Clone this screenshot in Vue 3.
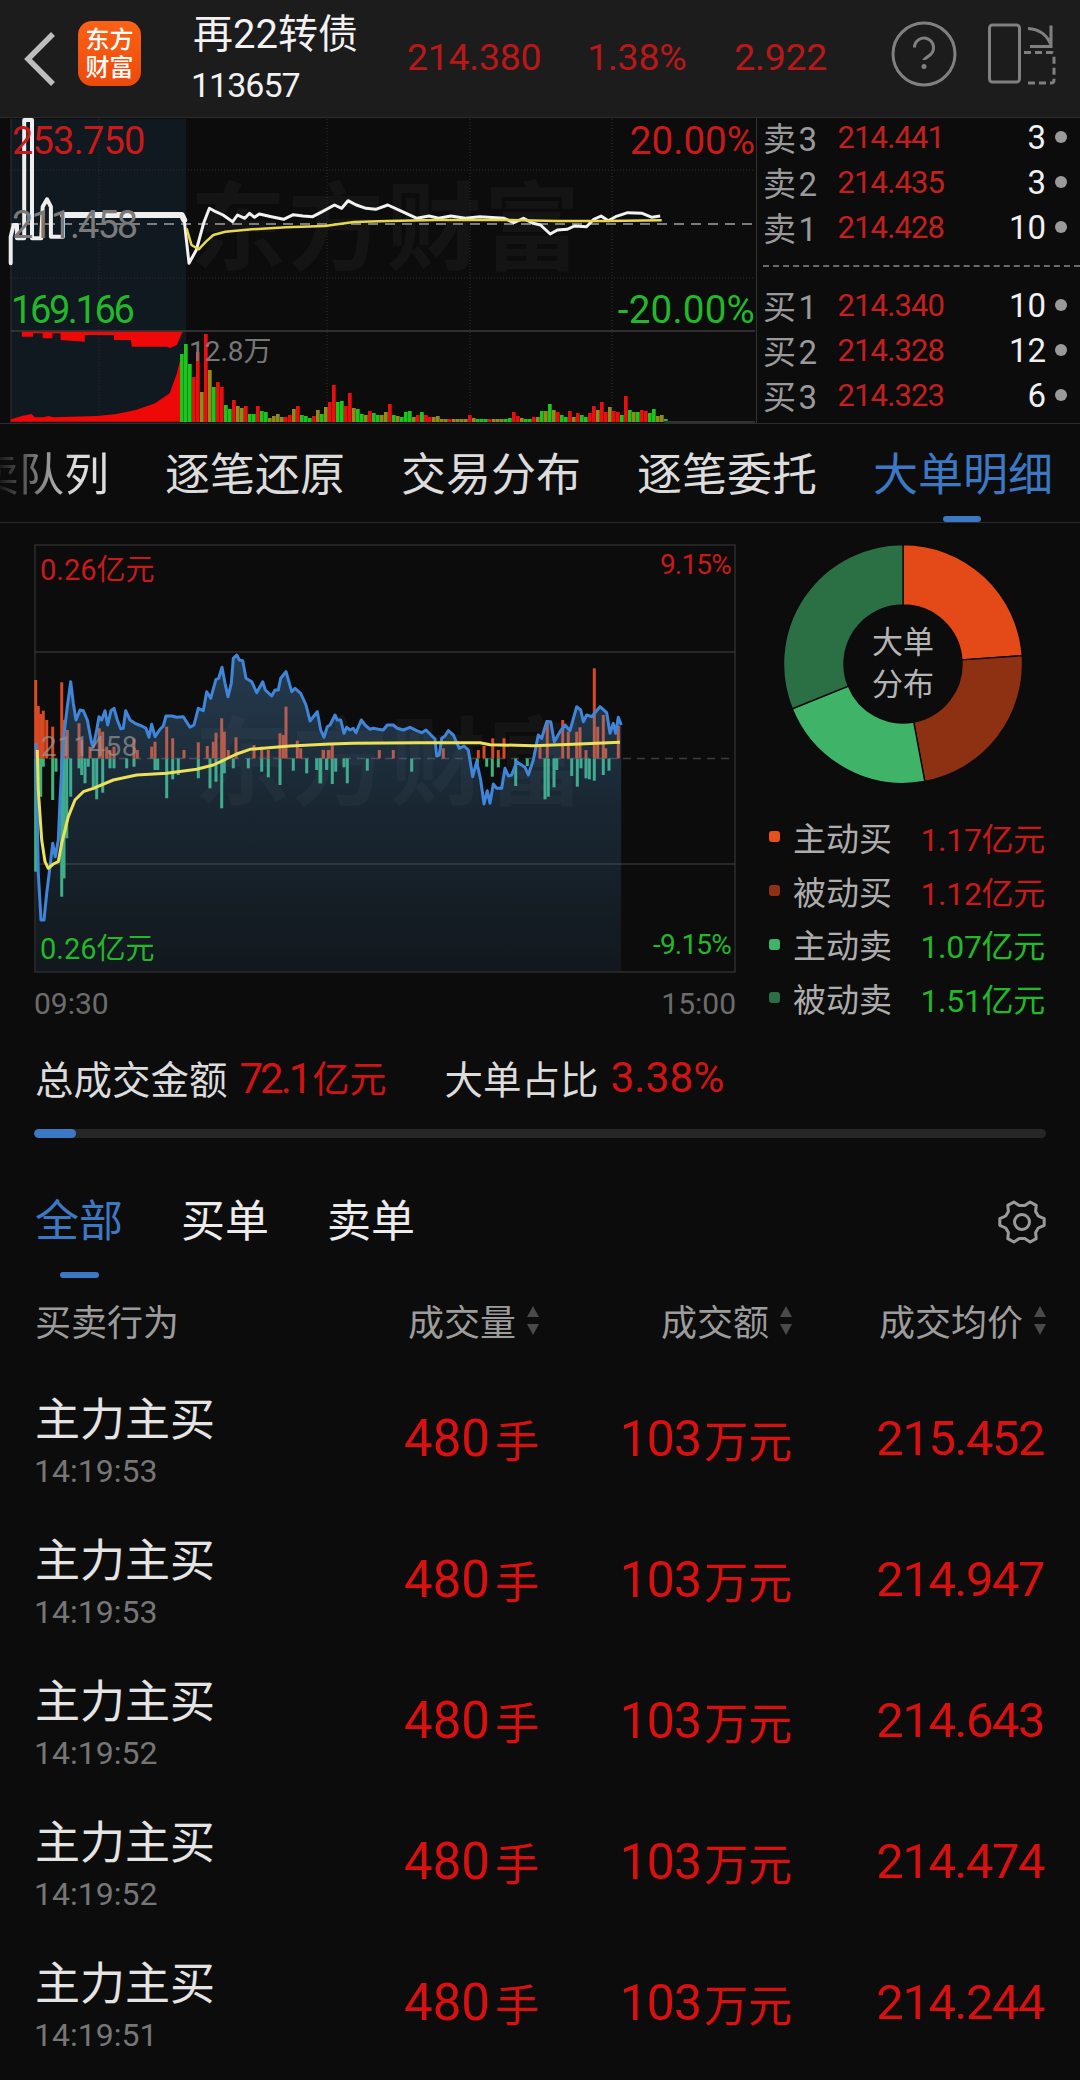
<script setup>
const pts = (a, sx, ox, sy, oy) => {
  const out = []
  for (let i = 0; i < a.length; i += 2) out.push([+(a[i] / sx + ox).toFixed(1), +(a[i + 1] / sy + oy).toFixed(1)])
  return out
}
const str = (p) => p.map((q) => q.join(',')).join(' ')
const T = (a) => pts(a, 2.063, 0, 3, 110)
const preLine = str(T([22,460,22,380,28,345,35,345,35,385,50,385,50,30,66,30,66,385,85,385,88,290,97,268,105,290,105,380,130,380,130,315]))
const preThick = str(T([130,315,375,315,380,330]))
const mainLine = str(T([380,330,390,460,405,420,420,340,432,295,445,305,460,315,480,335,490,315,505,325,515,310,525,322,535,312,560,320,585,328,605,314,625,318,645,320,665,305,690,285,705,295,718,272,735,285,755,295,775,298,800,285,830,305,860,325,885,318,905,325,930,318,960,325,990,320,1040,325,1060,338,1080,325,1100,340,1115,345,1135,372,1150,360,1170,358,1185,348,1210,350,1225,328,1240,318,1255,332,1270,320,1295,308,1325,310,1345,322,1362,318]))
const avgLine = str(T([385,355,395,405,410,418,425,395,440,375,465,365,520,358,590,352,670,348,730,336,800,333,900,330,1050,330,1150,333,1250,333,1365,331]))
const redArea = str(T([22,935,22,928,45,918,65,912,72,922,90,922,100,918,110,922,200,918,240,912,280,900,320,880,350,850,365,790,375,730,378,935]))
const redTop = str(T([45,665,45,680,68,680,68,670,88,670,88,685,108,685,108,670,125,670,125,690,175,695,175,675,235,675,235,690,270,690,272,710,345,710,350,715,365,705,375,670,378,665]))
const gridV = [99, 327, 470, 612]
const gridH = [170, 278]

const volA = 'g68 g78 g58 r45 r70 o30 r88 o52 g35 r40 r35 g17 g13 r22 o16 o14 r16 g8 g8 r16 g11 g10 o4 o6 o8 o5 r5 r7 o13 r16 g7 g6 g4 r6 o12 g8 o15 r20 r37 g20 g21 r16 r29 o14 g13 g8 o7 r11 g9 g7 o7 o10 r18 g7 o6 g5 g10 g11 o5 r7 g10 r7'.split(' ')
const volB = 'g8 r6 r5 o5 o6 o3 o3 r3 o3 o3 o3 o3 r7 o4 g3 g3 g3 r3 o3 o3 o3 g3 g4 r10 r6 o4 g3 g3 r5 o5 g11 o11 g18 o12 r10 g7 g5 r11 o5 r9 g7 g5 r9 r16 o12 r20 r10 o15 r11 r10 g7 r26 g12 o10 g10 r12 r11 g9 g13 o6 o7 g3'.split(' ')
const volColor = { r: '#e80f0f', g: '#1cc41c', o: '#938a1c' }
const bar = (s, x) => ({ x, h: +s.slice(1), c: volColor[s[0]] })
const vols = [
  ...volA.map((s, i) => bar(s, 180 + i * 4)),
  ...volB.map((s, i) => bar(s, 420 + i * 4))
]

const M1 = (a) => pts(a, 3, 30, 3, 640)
const M2 = (a) => pts(a, 3, 320, 3, 640)
const blueP = [
  ...M1([18,310,25,700,33,840,42,840,50,760,60,680,68,610,76,650,85,600,90,480,100,300,112,200,122,125,130,190,138,240,150,210,160,212,172,240,185,310,190,320,200,270,207,230,215,240,225,212,233,255,243,212,252,205,262,240,272,266,280,265,287,212,300,240,315,250,335,258,348,265,357,292,365,253,375,290,390,268,400,258,408,228,425,228,440,232,460,230,480,262,492,255,505,205,520,212,530,155,542,175,558,118,566,115,576,82,585,130,594,170,604,130,610,55,620,45,628,60,638,62,648,115,665,125,680,158,698,125,706,150,725,168,735,150,745,150,752,115,768,95,785,155,795,145,812,160,828,195,840,243,862,215,872,270,882,292,892,260,900,255]),
  ...M2([35,245,45,225,52,240,62,240,72,280,80,262,90,270,100,265,108,278,124,240,135,255,150,268,160,265,175,268,190,270,202,255,220,255,232,265,250,270,270,262,290,272,305,278,318,270,345,297,350,348,358,345,365,295,375,288,385,272,400,285,418,325,432,318,445,330,458,410,470,365,482,420,492,492,502,452,510,490,520,432,530,445,545,445,555,385,565,408,575,405,590,365,600,372,615,382,625,405,640,360,655,285,665,295,680,245,692,245,703,305,720,275,735,255,750,272,770,200,782,210,790,245,800,225,815,230,840,200,860,218,870,280,880,250,887,280,895,232,904,255])
]
const blueLine = str(blueP)
const blueFill = str([[36, 971], ...blueP, [621, 971]])
const yellowLine = str([
  ...M1([22,330,25,450,35,600,45,665,55,685,70,672,85,665,95,610,115,530,135,480,160,455,190,445,250,420,320,405,410,400,500,388,550,375,620,342,660,328,780,318,900,312]),
  ...M2([100,310,300,308,480,308,510,314,640,317,760,313,900,307])
])
const ZERO = 758.5
const upBars = [
  ...pts([17,120,25,198,32,222,40,212,50,240,68,260,95,127,102,240,112,270,147,250,155,300,180,320,208,265,218,275,230,320,240,330,252,320,312,296,322,330,365,320,375,305,410,260,428,295,462,330,505,307,532,318,550,305,558,278,575,235,583,275,595,330,618,292,672,315,695,320,715,330,750,280,760,285,768,200,802,302,812,325,880,330,897,330], 3, 30, 3, 640),
  ...pts([10,330,25,330,37,315,178,330,220,330,370,325,475,330,492,318,518,295,535,330,552,295,660,320,682,240,728,240,745,275,770,275,780,262,798,330,823,85,833,260,850,225,857,325,895,258], 3, 320, 3, 640)
]
const downBars = [
  ...pts([17,695,25,420,32,470,40,380,68,480,78,395,95,770,102,715,110,595,122,470,147,385,155,405,165,430,175,380,190,450,200,478,218,458,240,385,252,385,290,385,312,380,375,390,383,390,410,475,428,418,445,405,505,415,540,445,558,425,575,505,583,400,610,385,655,385,695,395,715,412,750,435,790,392,830,400,860,390,872,430,890,385], 3, 30, 3, 640),
  ...pts([0,430,20,390,37,432,47,395,72,382,82,430,142,392,275,395,472,385,500,380,517,410,535,382,587,438,622,378,675,478,685,470,702,442,710,390,755,408,772,440,783,385,798,415,808,418,823,422,850,405,867,392], 3, 320, 3, 640)
]

const CX = 120, CY = 120, R = 119.5, r = 59
const pol = (rad, deg) => {
  const a = ((deg - 90) * Math.PI) / 180
  return `${(CX + rad * Math.cos(a)).toFixed(2)} ${(CY + rad * Math.sin(a)).toFixed(2)}`
}
const seg = (a, b, c) => ({
  c,
  d: `M${pol(r, a)} L${pol(R, a)} A${R} ${R} 0 ${b - a > 180 ? 1 : 0} 1 ${pol(R, b)} L${pol(r, b)} A${r} ${r} 0 ${b - a > 180 ? 1 : 0} 0 ${pol(r, a)} Z`
})
const donut = [seg(0, 86, '#e34a17'), seg(86, 169.5, '#8e3113'), seg(169.5, 248, '#3fb368'), seg(248, 360, '#2b6f45')]

const gearPath = (() => {
  const cx = 24, cy = 23, hi = 22.5, lo = 17.5
  let d = ''
  for (let i = 0; i < 12; i++) {
    const deg = i * 30
    const rad = i % 2 === 0 ? hi : lo
    const a1 = ((deg - 9) * Math.PI) / 180, a2 = ((deg + 9) * Math.PI) / 180
    const p1 = `${(cx + rad * Math.cos(a1)).toFixed(1)} ${(cy + rad * Math.sin(a1) * 0.95).toFixed(1)}`
    const p2 = `${(cx + rad * Math.cos(a2)).toFixed(1)} ${(cy + rad * Math.sin(a2) * 0.95).toFixed(1)}`
    d += `${i === 0 ? 'M' : 'L'}${p1} L${p2} `
  }
  return d + 'Z'
})()

const sells = [['卖3', '214.441', '3'], ['卖2', '214.435', '3'], ['卖1', '214.428', '10']]
const buys = [['买1', '214.340', '10'], ['买2', '214.328', '12'], ['买3', '214.323', '6']]
const tabs = ['卖队列', '逐笔还原', '交易分布', '逐笔委托', '大单明细']
const legend = [
  ['#e8501c', '主动买', '1.17', 'red'],
  ['#8e3113', '被动买', '1.12', 'red'],
  ['#3fb368', '主动卖', '1.07', 'green'],
  ['#2b6f45', '被动卖', '1.51', 'green']
]
const rows = [
  ['14:19:53', '215.452'],
  ['14:19:53', '214.947'],
  ['14:19:52', '214.643'],
  ['14:19:52', '214.474'],
  ['14:19:51', '214.244']
]
</script>

<template>
  <div class="page">
    <header class="head">
      <svg class="back" width="34" height="58" viewBox="0 0 34 58"><path d="M30 4 L5 29 L30 54" fill="none" stroke="#bdbdbd" stroke-width="5.5" /></svg>
      <div class="logo"><span>东方</span><span>财富</span></div>
      <div class="title">
        <div class="t1">再22转债</div>
        <div class="t2">113657</div>
      </div>
      <div class="q q1">214.380</div>
      <div class="q q2">1.38%</div>
      <div class="q q3">2.922</div>
      <svg class="help" width="66" height="66" viewBox="0 0 66 66">
        <circle cx="33" cy="33" r="31" fill="none" stroke="#808080" stroke-width="3" />
        <path d="M23.5 26.5 a9.5 9.5 0 1 1 15.5 7.5 c-4 3 -6 4 -6 5" fill="none" stroke="#808080" stroke-width="3" />
        <circle cx="33" cy="45.5" r="2.5" fill="#808080" />
      </svg>
      <svg class="split" width="68" height="66" viewBox="0 0 68 66">
        <rect x="1.5" y="4" width="30" height="57" rx="3" fill="none" stroke="#808080" stroke-width="3" />
        <path d="M40 7.5 Q57 8.5 63 24 M63 4.5 V25.5 H42" fill="none" stroke="#808080" stroke-width="3" />
        <path d="M36 31.5 H63 q3 0 3 3 V59 q0 3 -3 3 H36" fill="none" stroke="#808080" stroke-width="3" stroke-dasharray="7 4" />
      </svg>
    </header>

    <section class="market">
      <div class="tchart">
        <svg width="757" height="306" viewBox="0 118 757 306">
          <rect x="11" y="119" width="175" height="304" fill="#101820" />
          <text x="190" y="262" class="wm">东方财富</text>
          <line v-for="x in gridV" :key="x" :x1="x" :x2="x" y1="119" y2="421" stroke="#2e2e2e" stroke-dasharray="1 2" />
          <line v-for="y in gridH" :key="y" x1="11" x2="755" :y1="y" :y2="y" stroke="#2e2e2e" stroke-dasharray="1 2" />
          <line x1="11" x2="11" y1="119" y2="423" stroke="#333" />
          <line x1="11" x2="755" y1="331" y2="331" stroke="#3a3a3a" stroke-width="1.5" />
          <line x1="11" x2="755" y1="224" y2="224" stroke="#7c7c7c" stroke-width="2" stroke-dasharray="10 7" />
          <polygon :points="redArea" fill="#ee0808" />
          <polygon :points="redTop" fill="#ee0808" />
          <rect v-for="(b, i) in vols" :key="i" :x="b.x" :y="422 - b.h" width="3.7" :height="b.h" :fill="b.c" />
          <rect x="664" y="421" width="91" height="2" fill="#333" />
          <polyline :points="preLine" fill="none" stroke="#eee" stroke-width="4" stroke-linejoin="round" stroke-linecap="round" />
          <polyline :points="preThick" fill="none" stroke="#eee" stroke-width="6" stroke-linejoin="round" stroke-linecap="round" />
          <polyline :points="mainLine" fill="none" stroke="#f2f2f2" stroke-width="3" stroke-linejoin="round" />
          <polyline :points="avgLine" fill="none" stroke="#e6d84e" stroke-width="2.5" stroke-linejoin="round" />
        </svg>
        <span class="lb red tl">253.750</span>
        <span class="lb red tr">20.00%</span>
        <span class="lb grey tm">211.458</span>
        <span class="lb green bl">169.166</span>
        <span class="lb green br">-20.00%</span>
        <span class="vol">12.8万</span>
      </div>
      <div class="book">
        <div class="bside">
          <div v-for="s in sells" :key="s[0]" class="brow">
            <span class="bl1">{{ s[0] }}</span><span class="bp">{{ s[1] }}</span><span class="bq">{{ s[2] }}</span><i class="dot"></i>
          </div>
        </div>
        <div class="bdash"></div>
        <div class="bside">
          <div v-for="s in buys" :key="s[0]" class="brow">
            <span class="bl1">{{ s[0] }}</span><span class="bp">{{ s[1] }}</span><span class="bq">{{ s[2] }}</span><i class="dot"></i>
          </div>
        </div>
      </div>
    </section>

    <nav class="tabs">
      <span v-for="(t, i) in tabs" :key="t" class="tab" :class="{ fade: i === 0, on: i === 4 }">{{ t }}</span>
      <i class="tabbar"></i>
    </nav>

    <section class="mid">
      <div class="mleft">
        <div class="mchart">
          <svg width="760" height="450" viewBox="0 524 760 450">
            <defs>
              <linearGradient id="bf" gradientUnits="userSpaceOnUse" x1="0" y1="650" x2="0" y2="972">
                <stop offset="0" stop-color="#5b9ad8" stop-opacity=".34" />
                <stop offset=".5" stop-color="#4d8fc6" stop-opacity=".2" />
                <stop offset="1" stop-color="#4d8fc6" stop-opacity=".09" />
              </linearGradient>
            </defs>
            <text x="194" y="797" class="wm">东方财富</text>
            <rect x="35" y="545" width="700" height="427" fill="none" stroke="#2c2c2c" stroke-width="1.5" />
            <line x1="35" x2="735" y1="652" y2="652" stroke="#303030" stroke-width="1.5" />
            <line x1="35" x2="735" y1="864" y2="864" stroke="#303030" stroke-width="1.5" />
            <line x1="35" x2="735" :y1="ZERO" :y2="ZERO" stroke="#3c3c3c" stroke-width="1.5" stroke-dasharray="8 6" />
            <rect v-for="(b, i) in upBars" :key="'u' + i" :x="b[0] - 1.5" :y="b[1]" width="3" :height="ZERO - b[1]" fill="#d84a22" />
            <rect v-for="(b, i) in downBars" :key="'d' + i" :x="b[0] - 1.5" :y="ZERO" width="3" :height="b[1] - ZERO" fill="#3cb37f" />
            <polygon :points="blueFill" fill="url(#bf)" />
            <polyline :points="blueLine" fill="none" stroke="#3f86da" stroke-width="3" stroke-linejoin="round" />
            <polyline :points="yellowLine" fill="none" stroke="#ece25a" stroke-width="3" stroke-linejoin="round" />
          </svg>
          <span class="ml red m1">0.26亿元</span>
          <span class="ml red m2">9.15%</span>
          <span class="ml green m3">0.26亿元</span>
          <span class="ml green m4">-9.15%</span>
          <span class="ml mg">211458</span>
        </div>
        <div class="axis"><span>09:30</span><span>15:00</span></div>
      </div>
      <div class="mright">
        <div class="donut">
          <svg width="240" height="240" viewBox="0 0 240 240">
            <path v-for="s in donut" :key="s.c" :d="s.d" :fill="s.c" stroke="#0c0c0c" stroke-width="1.4" />
          </svg>
          <div class="dtext">大单<br />分布</div>
        </div>
        <div class="legend">
          <div v-for="l in legend" :key="l[1]" class="lrow">
            <i class="ldot" :style="{ background: l[0] }"></i>
            <span class="ln">{{ l[1] }}</span>
            <span class="lv" :class="l[3]">{{ l[2] }}亿元</span>
          </div>
        </div>
      </div>
    </section>

    <section class="stats">
      <span>总成交金额</span><b class="amt"><em>72.1</em>亿元</b>
      <span class="s2">大单占比</span><b class="pct">3.38%</b>
    </section>
    <div class="progress"><i></i></div>

    <div class="subtabs">
      <div class="st on"><span>全部</span><i></i></div>
      <div class="st"><span>买单</span></div>
      <div class="st"><span>卖单</span></div>
      <svg class="gear" width="48" height="46" viewBox="0 0 48 46">
        <path :d="gearPath" fill="none" stroke="#9a9a9a" stroke-width="3" stroke-linejoin="round" />
        <circle cx="24" cy="23" r="7.5" fill="none" stroke="#9a9a9a" stroke-width="3" />
      </svg>
    </div>

    <div class="thead">
      <span class="c1">买卖行为</span>
      <span class="c2">成交量<i class="sort"><u></u><s></s></i></span>
      <span class="c3">成交额<i class="sort"><u></u><s></s></i></span>
      <span class="c4">成交均价<i class="sort"><u></u><s></s></i></span>
    </div>

    <div v-for="(r2, i) in rows" :key="i" class="trow">
      <div class="c1 who">
        <div class="nm">主力主买</div>
        <div class="tm2">{{ r2[0] }}</div>
      </div>
      <div class="c2 val v2">480<small class="u1">手</small></div>
      <div class="c3 val v3">103<small>万元</small></div>
      <div class="c4 val v4"><span>{{ r2[1] }}</span></div>
    </div>
  </div>
</template>

<style>
html, body { margin: 0; background: #0c0c0c; }
</style>

<style scoped>
.page {
  width: 1080px;
  height: 2080px;
  overflow: hidden;
  background: #0c0c0c;
  color: #e6e6e6;
  font-family: Roboto, "Noto Sans CJK SC", sans-serif;
  display: flex;
  flex-direction: column;
}
.red { color: #c81a1a; }
.green { color: #22b82a; }
.grey { color: #7a7a7a; }

.head {
  height: 118px;
  flex: none;
  box-sizing: border-box;
  background: #1c1c1c;
  border-bottom: 1px solid #2c2c2c;
  display: flex;
  align-items: center;
}
.back { margin-left: 23px; flex: none; }
.logo {
  margin-left: 21px;
  width: 63px;
  height: 65px;
  margin-top: -10px;
  flex: none;
  border-radius: 14px;
  background: linear-gradient(180deg, #fb6215, #ec4a0c);
  color: #fff;
  font-size: 24px;
  font-weight: 500;
  line-height: 28px;
  display: flex;
  flex-direction: column;
  align-items: center;
  justify-content: center;
}
.title { margin-left: 52px; width: 214px; flex: none; color: #f2f2f2; }
.t1 { font-size: 40px; line-height: 44px; margin-top: 0; }
.t2 { font-size: 34px; line-height: 40px; margin-top: 8px; letter-spacing: -1px; margin-left: -2px; }
.q { font-size: 37.5px; color: #b91818; flex: none; margin-top: -4px; letter-spacing: -.3px; }
.q2 { margin-left: 46px; }
.q3 { margin-left: 48px; }
.help { margin-left: auto; margin-top: -10px; flex: none; transform: translateX(2px); }
.split { margin-left: 33px; margin-right: 24px; margin-top: -10px; flex: none; }

.market { display: flex; height: 306px; flex: none; border-bottom: 1px solid #2c2c2c; box-sizing: border-box; }
.tchart { position: relative; width: 757px; flex: none; border-right: 1px solid #333; box-sizing: border-box; }
.tchart svg { display: block; }
.wm { font-size: 96px; font-weight: 700; fill: #141414; letter-spacing: 2px; font-family: "Noto Sans CJK SC", sans-serif; }
.lb { position: absolute; font-size: 38px; line-height: 44px; }
.tl { left: 12px; top: 1px; letter-spacing: -.8px; }
.tr { right: 1px; top: 1px; font-size: 38.6px; }
.tm { left: 12px; top: 85px; letter-spacing: -2px; }
.bl { left: 11px; top: 170px; letter-spacing: -2.4px; }
.br { right: 1px; top: 170px; font-size: 38.6px; letter-spacing: .2px; }
.vol { position: absolute; left: 189px; top: 218px; font-size: 28px; line-height: 32px; color: #777; }

.book { flex: 1; margin-top: -3.5px; }
.brow { height: 45px; display: flex; align-items: center; }
.bl1 { width: 70px; margin-left: 6px; font-size: 33px; letter-spacing: 2.5px; color: #9a9a9a; flex: none; }
.bp { width: 111px; text-align: right; font-size: 31px; color: #c31f1f; letter-spacing: -.9px; flex: none; }
.bq { width: 102px; text-align: right; font-size: 33px; color: #f0f0f0; flex: none; }
.dot { width: 12px; height: 12px; border-radius: 50%; background: #9a9a9a; margin-left: 9px; flex: none; }
.bdash { height: 0; border-top: 2px dashed #6a6a6a; margin: 15px 0 16px 6px; }

.tabs {
  position: relative;
  height: 98px;
  flex: none;
  border-bottom: 1px solid #2c2c2c;
  display: flex;
  align-items: center;
  gap: 56px;
  margin-left: -26px;
  color: #dcdcdc;
}
.tab { font-size: 45px; flex: none; margin-top: 6px; line-height: 54px; }
.tab.on { color: #3c78c4; }
.tab.fade { -webkit-mask-image: linear-gradient(90deg, transparent 15%, #000 75%); mask-image: linear-gradient(90deg, transparent 15%, #000 75%); }
.tabbar { position: absolute; left: 969px; bottom: 0; width: 38px; height: 6px; border-radius: 3px; background: #3c78c4; }

.mid { display: flex; height: 509px; margin-top: 1px; flex: none; }
.mleft { width: 760px; flex: none; }
.mchart { position: relative; height: 450px; }
.mchart svg { display: block; }
.ml { position: absolute; font-size: 29px; line-height: 32px; }
.m1 { left: 40px; top: 30px; }
.m2 { right: 29px; top: 25px; letter-spacing: -.8px; font-size: 28px; }
.m3 { left: 40px; top: 409px; }
.m4 { right: 29px; top: 405px; letter-spacing: -.8px; font-size: 28px; }
.mg { left: 41px; top: 207px; font-size: 28px; color: rgba(150, 150, 150, .7); letter-spacing: .4px; }
.axis { display: flex; justify-content: space-between; padding: 13px 24px 0 34px; font-size: 30px; line-height: 34px; color: #6c6c6c; }
.mright { flex: 1; }
.donut { position: relative; width: 240px; height: 240px; margin: 20px 0 0 23px; }
.donut svg { display: block; }
.dtext { position: absolute; inset: 0; display: flex; align-items: center; justify-content: center; text-align: center; font-size: 31px; line-height: 42px; color: #b4b4b4; }
.legend { margin-top: 26px; }
.lrow { height: 53.7px; display: flex; align-items: center; }
.ldot { width: 11px; height: 11px; border-radius: 3px; margin-left: 9px; flex: none; }
.ln { margin-left: 13px; font-size: 33px; color: #adadad; flex: none; }
.lv { margin-left: auto; margin-right: 35px; font-size: 32px; letter-spacing: -.3px; }

.stats { height: 88px; flex: none; padding-left: 35px; display: flex; align-items: center; font-size: 38.5px; color: #dcdcdc; }
.stats b { font-weight: 400; margin-left: 12px; color: #d01414; }
.amt { font-size: 37px; }
.amt em { font-style: normal; font-size: 42px; letter-spacing: -3px; margin-right: 3px; }
.pct { font-size: 42.5px; }
.stats .s2 { margin-left: 58px; }
.progress { height: 9px; flex: none; margin: 8px 34px 0; border-radius: 5px; background: #262626; overflow: hidden; }
.progress i { display: block; width: 42px; height: 9px; border-radius: 5px; background: #3c78c4; }

.subtabs { margin-top: 57px; height: 83px; flex: none; display: flex; padding: 0 34px 0 35px; gap: 58px; }
.st { font-size: 44px; line-height: 54px; color: #ececec; width: 88px; display: flex; flex-direction: column; align-items: center; }
.st.on { color: #3c78c4; }
.st i { width: 39px; height: 6px; border-radius: 3px; background: #3c78c4; margin-top: 23px; }
.gear { margin-left: auto; margin-top: 4px; }

.thead { height: 84px; margin-bottom: 6px; flex: none; display: flex; align-items: center; padding-left: 35px; font-size: 36px; color: #9c9c9c; }
.c1 { width: 265px; flex: none; }
.c2 { width: 239px; flex: none; display: flex; justify-content: flex-end; align-items: center; }
.c3 { width: 253px; flex: none; display: flex; justify-content: flex-end; align-items: center; }
.c4 { width: 254px; flex: none; display: flex; justify-content: flex-end; align-items: center; }
.sort { display: flex; flex-direction: column; gap: 7px; margin-left: 11px; }
.sort u { display: block; width: 0; height: 0; border-left: 6px solid transparent; border-right: 6px solid transparent; border-bottom: 11px solid #4a4a4a; }
.sort s { display: block; width: 0; height: 0; border-left: 6px solid transparent; border-right: 6px solid transparent; border-top: 11px solid #4a4a4a; }

.trow { height: 141px; flex: none; display: flex; align-items: center; padding-left: 35px; }
.who { padding-top: 7px; }
.nm { font-size: 45px; line-height: 52px; color: #e4e4e4; }
.tm2 { font-size: 32px; line-height: 38px; color: #767676; margin-top: 5px; margin-left: -1px; }
.val { font-size: 50px; color: #d81010; }
.val small { font-size: 44px; margin-left: 3px; }
.v2 { font-size: 51px; }
.val .u1 { margin-left: 5px; }
.v3 { letter-spacing: -1px; }
.v3 small { letter-spacing: 0; }
.v4 { font-size: 49px; letter-spacing: -1.5px; }
.v4 span { margin-right: 2px; }
</style>
